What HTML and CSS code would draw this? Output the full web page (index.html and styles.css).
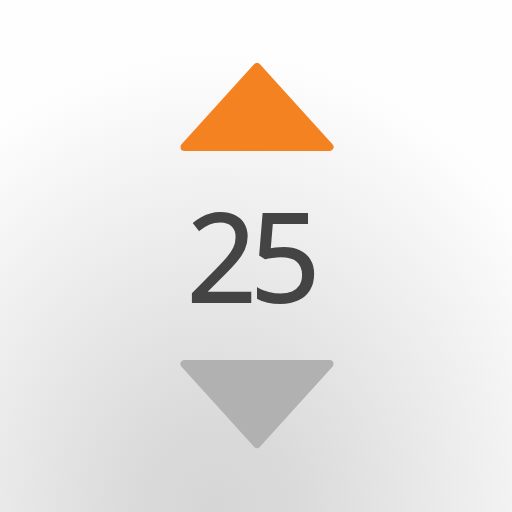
FILE: index.html
```html
<!DOCTYPE html>
<html>
<head>
<meta charset="utf-8">
<link rel="stylesheet" href="styles.css">
</head>
<body>
<div class="stepper">
  <button class="arrow up" aria-label="Increase">
    <svg width="160" height="96" viewBox="0 0 160 96"><polygon points="80,8 152.5,88 7.5,88" /></svg>
  </button>
  <div class="value">25</div>
  <button class="arrow down" aria-label="Decrease">
    <svg width="160" height="96" viewBox="0 0 160 96"><polygon points="7.5,8 152.5,8 80,88" /></svg>
  </button>
</div>
</body>
</html>
```
FILE: styles.css
```css
html, body {
  margin: 0;
  padding: 0;
  width: 512px;
  height: 512px;
  overflow: hidden;
}
body {
  background: radial-gradient(ellipse 400px 460px at 42% 100%, #d6d6d6 0%, #dadada 20%, #fefefe 100%);
  font-family: "Open Sans", "Noto Sans", sans-serif;
}
.stepper {
  display: flex;
  flex-direction: column;
  align-items: center;
  padding-top: 59px;
  padding-left: 1px;
}
.arrow {
  display: block;
  border: 0;
  padding: 0;
  margin: 0;
  background: none;
  line-height: 0;
}
.arrow svg {
  display: block;
}
.arrow polygon {
  stroke-width: 8;
  stroke-linejoin: round;
}
.up polygon {
  fill: #f58220;
  stroke: #f58220;
}
.down polygon {
  fill: #b1b1b1;
  stroke: #b1b1b1;
}
.value {
  font-size: 123px;
  font-weight: 400;
  line-height: 126px;
  letter-spacing: -7px;
  padding-right: 13px;
  color: #444444;
  -webkit-text-stroke: 1.8px #444444;
  margin-top: 37px;
  margin-bottom: 38px;
}
```
